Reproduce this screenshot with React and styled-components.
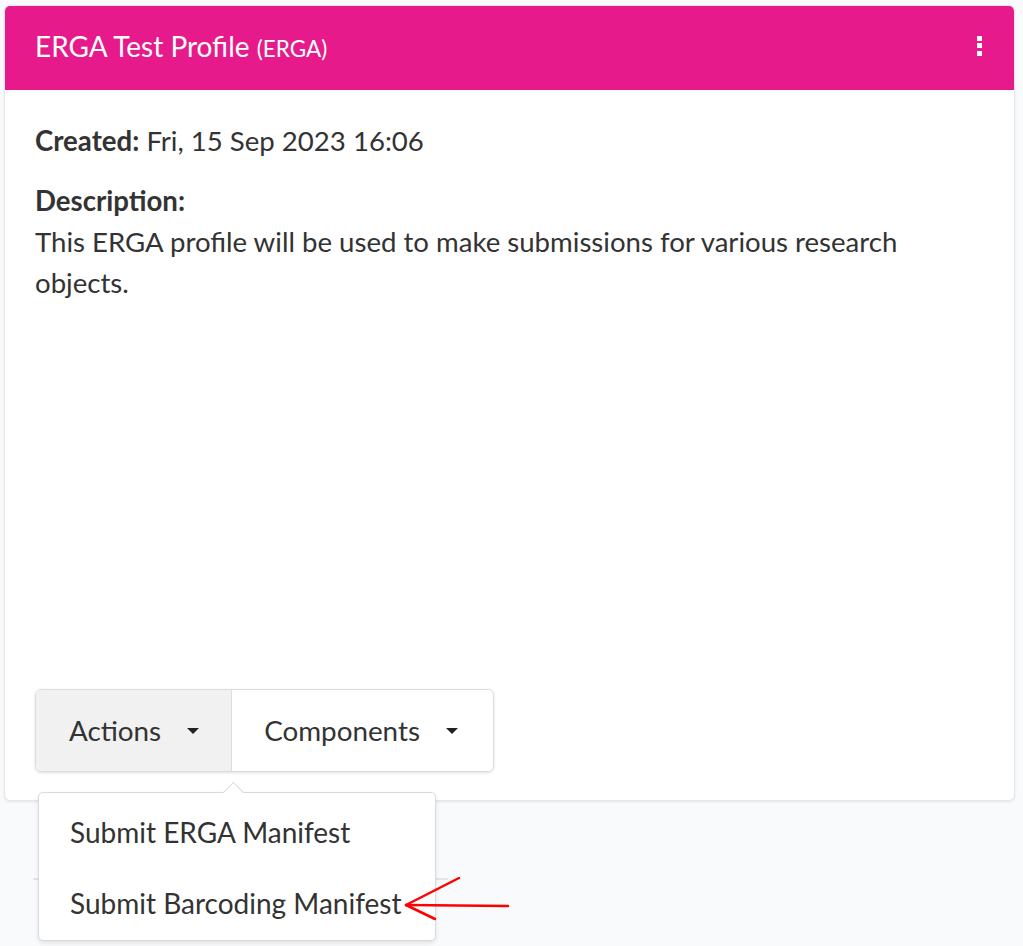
import styled, { createGlobalStyle } from 'styled-components';

const GlobalStyle = createGlobalStyle`
  html, body {
    margin: 0;
    background: #f9fafb;
    font-family: Lato, "Open Sans", sans-serif;
    color: #333;
  }
`;

const Page = styled.div`
  padding: 5px 8px 0 4px;
  height: 946px;
  box-sizing: border-box;
  position: relative;
`;

const Card = styled.div`
  height: 796px;
  display: flex;
  flex-direction: column;
  background: #fff;
  border: 1px solid #e4e7eb;
  border-radius: 6px;
  box-shadow: 0 1px 3px rgba(0, 0, 0, 0.08);
  box-sizing: border-box;
`;

const Header = styled.div`
  height: 84px;
  flex-shrink: 0;
  display: flex;
  align-items: center;
  justify-content: space-between;
  padding: 0 32px 0 30px;
  background: #e61a8a;
  color: #fff;
  border-radius: 5px 5px 0 0;
`;

const Title = styled.div`
  font-size: 28px;
  margin-top: -4px;
`;

const Code = styled.span`
  font-size: 22.5px;
`;

const Kebab = styled.div`
  display: flex;
  flex-direction: column;
  gap: 2.5px;
  margin-top: -5px;

  span {
    width: 5px;
    height: 5px;
    background: #fff;
  }
`;

const Body = styled.div`
  flex: 1;
  display: flex;
  flex-direction: column;
  padding: 30px 30px 28px;
  font-size: 27.6px;
  line-height: 41px;
`;

const Field = styled.div`
  margin-bottom: ${(p) => p.gap || 0}px;
`;

const Label = styled.b`
  font-weight: 700;
`;

const Group = styled.div`
  margin-top: auto;
  align-self: flex-start;
  display: flex;
  position: relative;
  border: 1px solid #dcdcdc;
  border-radius: 6px;
  box-shadow: 0 1px 3px rgba(0, 0, 0, 0.12);
`;

const GroupButton = styled.div`
  display: flex;
  align-items: center;
  gap: 26px;
  height: 81px;
  padding: 0 ${(p) => p.pr}px 0 ${(p) => p.pl}px;
  box-sizing: border-box;
  background: ${(p) => (p.active ? '#f1f1f1' : '#fff')};
  border-left: ${(p) => (p.first ? 'none' : '1px solid #dcdcdc')};
  border-radius: ${(p) => (p.first ? '6px 0 0 6px' : '0 6px 6px 0')};
  font-size: 27.8px;
  color: #333;
`;

const Caret = styled.span`
  width: 0;
  height: 0;
  border-left: 6px solid transparent;
  border-right: 6px solid transparent;
  border-top: 6px solid #222;
`;

const Menu = styled.div`
  position: absolute;
  top: 102px;
  left: 2px;
  width: 396px;
  background: #fff;
  border: 1px solid #d8dadd;
  border-radius: 5px;
  box-shadow: 0 2px 4px rgba(0, 0, 0, 0.1);
  padding: 4px 0 1px;
  z-index: 5;

  &::before {
    content: '';
    position: absolute;
    top: -8px;
    left: 187px;
    width: 14px;
    height: 14px;
    background: #fff;
    border-left: 1px solid #d8dadd;
    border-top: 1px solid #d8dadd;
    transform: rotate(45deg);
  }
`;

const MenuItem = styled.div`
  padding: 0 31px;
  height: 71px;
  display: flex;
  align-items: center;
  font-size: 28px;
  color: #333;
`;

const Divider = styled.div`
  margin: 77px 0 0 29px;
  width: 415px;
  height: 2px;
  background: #e2e4e7;
`;

const Annotation = styled.svg`
  position: absolute;
  left: 400px;
  top: 872px;
  z-index: 10;
`;

export default function App() {
  return (
    <Page>
      <GlobalStyle />
      <Card>
        <Header>
          <Title>
            ERGA Test Profile <Code>(ERGA)</Code>
          </Title>
          <Kebab>
            <span />
            <span />
            <span />
          </Kebab>
        </Header>
        <Body>
          <Field gap={19}>
            <Label>Created:</Label> Fri, 15 Sep 2023 16:06
          </Field>
          <Field>
            <Label>Description:</Label>
            <br />
            This ERGA profile will be used to make submissions for various research objects.
          </Field>
          <Group>
            <GroupButton first active pl={33} pr={32}>
              Actions <Caret />
            </GroupButton>
            <GroupButton pl={32} pr={35}>
              Components <Caret />
            </GroupButton>
            <Menu>
              <MenuItem>Submit ERGA Manifest</MenuItem>
              <MenuItem>Submit Barcoding Manifest</MenuItem>
            </Menu>
          </Group>
        </Body>
      </Card>
      <Divider />
      <Annotation width="115" height="55" viewBox="0 0 115 55">
        <g stroke="#f00" strokeWidth="2.5" fill="none" strokeLinecap="round">
          <line x1="6" y1="33" x2="108" y2="34" />
          <line x1="6" y1="33" x2="59" y2="6" />
          <line x1="6" y1="33" x2="35" y2="47" />
        </g>
      </Annotation>
    </Page>
  );
}
